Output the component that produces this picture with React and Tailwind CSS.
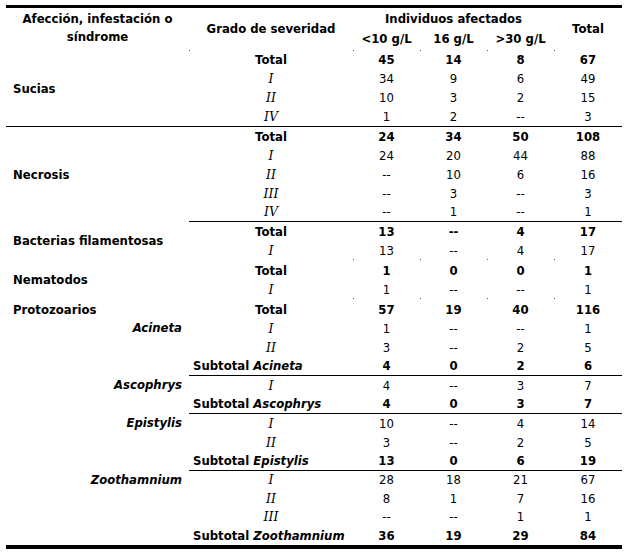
const sections = [
  {
    label: 'Sucias',
    line: true,
    rows: [
      { g: 'Total', v: ['45', '14', '8', '67'], b: true },
      { g: 'I', v: ['34', '9', '6', '49'] },
      { g: 'II', v: ['10', '3', '2', '15'] },
      { g: 'IV', v: ['1', '2', '--', '3'] },
    ],
  },
  {
    label: 'Necrosis',
    rows: [
      { g: 'Total', v: ['24', '34', '50', '108'], b: true },
      { g: 'I', v: ['24', '20', '44', '88'] },
      { g: 'II', v: ['--', '10', '6', '16'] },
      { g: 'III', v: ['--', '3', '--', '3'] },
      { g: 'IV', v: ['--', '1', '--', '1'], line: true },
    ],
  },
  {
    label: 'Bacterias filamentosas',
    rows: [
      { g: 'Total', v: ['13', '--', '4', '17'], b: true },
      { g: 'I', v: ['13', '--', '4', '17'], dots: true },
    ],
  },
  {
    label: 'Nematodos',
    pad: true,
    rows: [
      { g: 'Total', v: ['1', '0', '0', '1'], b: true },
      { g: 'I', v: ['1', '--', '--', '1'], dots: true },
    ],
  },
  {
    label: 'Protozoarios',
    pad: true,
    rows: [{ g: 'Total', v: ['57', '19', '40', '116'], b: true }],
  },
  {
    genus: 'Acineta',
    rows: [
      { g: 'I', v: ['1', '--', '--', '1'] },
      { g: 'II', v: ['3', '--', '2', '5'] },
      { sub: 'Acineta', v: ['4', '0', '2', '6'], b: true, line: true },
    ],
  },
  {
    genus: 'Ascophrys',
    rows: [
      { g: 'I', v: ['4', '--', '3', '7'] },
      { sub: 'Ascophrys', v: ['4', '0', '3', '7'], b: true, line: true },
    ],
  },
  {
    genus: 'Epistylis',
    rows: [
      { g: 'I', v: ['10', '--', '4', '14'] },
      { g: 'II', v: ['3', '--', '2', '5'] },
      { sub: 'Epistylis', v: ['13', '0', '6', '19'], b: true, line: true },
    ],
  },
  {
    genus: 'Zoothamnium',
    last: true,
    rows: [
      { g: 'I', v: ['28', '18', '21', '67'] },
      { g: 'II', v: ['8', '1', '7', '16'] },
      { g: 'III', v: ['--', '--', '1', '1'] },
      { sub: 'Zoothamnium', v: ['36', '19', '29', '84'], b: true },
    ],
  },
];

// tiny leftover cell-corner marks seen in the source table
const Dot = () => <span className="absolute left-0 bottom-0 w-px h-px bg-gray-600" />;

const Row = ({ r, h }) => (
  <div className={`grid grid-cols-[164px_67px_67px_67px_68px] ${h} items-center ${r.line ? 'border-b border-black' : ''}`}>
    {r.sub ? (
      <div className="pl-[4px] font-bold whitespace-nowrap">
        Subtotal <span className="italic">{r.sub}</span>
      </div>
    ) : r.g === 'Total' ? (
      <div className="text-center font-bold">Total</div>
    ) : (
      <div className="text-center italic font-['DejaVu_Serif',serif] text-[12.5px]">{r.g}</div>
    )}
    {r.v.map((x, j) => (
      <div key={j} className={`relative h-full flex items-center justify-center ${r.b ? 'font-bold' : 'font-normal'}`}>
        {x}
        {r.dots && <Dot />}
      </div>
    ))}
  </div>
);

export default function App() {
  return (
    <div className="w-[635px] h-[555px] bg-white pt-[5px] pl-[6px] text-black font-['DejaVu_Sans',sans-serif] text-[11.7px] leading-[14px]">
      <div className="w-[616px]">
        <div className="flex h-[46px] border-t-[3px] border-black font-bold">
          <div className="w-[183px] flex flex-col justify-center items-center leading-[18px] pb-[3px]">
            <span>Afección, infestación o</span>
            <span>síndrome</span>
          </div>
          <div className="relative w-[164px] flex items-center justify-center pb-[2px]">
            Grado de severidad
            <Dot />
          </div>
          <div className="w-[201px] flex flex-col">
            <div className="h-[22px] flex items-center justify-center">Individuos afectados</div>
            <div className="grid grid-cols-3 flex-1 text-center">
              <span className="relative pt-[2px]">&lt;10 g/L<Dot /></span>
              <span className="relative pt-[2px]">16 g/L<Dot /></span>
              <span className="relative pt-[2px]">&gt;30 g/L<Dot /></span>
            </div>
          </div>
          <div className="relative w-[68px] flex items-center justify-center pb-[2px]">
            Total
            <Dot />
          </div>
        </div>
        {sections.map((s, i) => (
          <div
            key={i}
            className={`flex ${s.pad ? 'pt-[1px]' : ''} ${s.line ? 'border-b border-black' : ''} ${s.last ? 'border-b-4 border-black' : ''}`}
          >
            {s.label ? (
              <div className="w-[183px] flex items-center pl-[7px] font-bold whitespace-nowrap">{s.label}</div>
            ) : (
              <div className="w-[183px] h-[19px] flex items-center justify-end pr-[7px] pb-[2px] font-bold italic">
                {s.genus}
              </div>
            )}
            <div className="w-[433px]">
              {s.rows.map((r, j) => (
                <Row key={j} r={{ ...r, line: r.line && !s.line }} h={s.last ? 'h-[18.4px]' : s.line ? 'h-[18.8px]' : 'h-[19px]'} />
              ))}
            </div>
          </div>
        ))}
      </div>
    </div>
  );
}
